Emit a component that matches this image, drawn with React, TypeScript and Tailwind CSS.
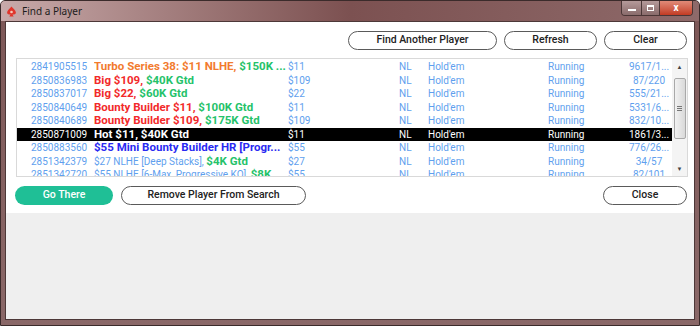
import React from 'react';

type Part = { text: string; color: string; bold?: boolean };
type Row = {
  id: string;
  name: Part[];
  buyIn: string;
  players: string;
  selected?: boolean;
};

const GREEN = 'text-[#25c26a]';

const rows: Row[] = [
  {
    id: '2841905515',
    name: [
      { text: 'Turbo Series 38: $11 NLHE, ', color: 'text-[#f27b2e]', bold: true },
      { text: '$150K ...', color: GREEN, bold: true },
    ],
    buyIn: '$11',
    players: '9617/1...',
  },
  {
    id: '2850836983',
    name: [
      { text: 'Big $109, ', color: 'text-[#f22a2a]', bold: true },
      { text: '$40K Gtd', color: GREEN, bold: true },
    ],
    buyIn: '$109',
    players: '87/220',
  },
  {
    id: '2850837017',
    name: [
      { text: 'Big $22, ', color: 'text-[#f22a2a]', bold: true },
      { text: '$60K Gtd', color: GREEN, bold: true },
    ],
    buyIn: '$22',
    players: '555/21...',
  },
  {
    id: '2850840649',
    name: [
      { text: 'Bounty Builder $11, ', color: 'text-[#f22a2a]', bold: true },
      { text: '$100K Gtd', color: GREEN, bold: true },
    ],
    buyIn: '$11',
    players: '5331/6...',
  },
  {
    id: '2850840689',
    name: [
      { text: 'Bounty Builder $109, ', color: 'text-[#f22a2a]', bold: true },
      { text: '$175K Gtd', color: GREEN, bold: true },
    ],
    buyIn: '$109',
    players: '832/10...',
  },
  {
    id: '2850871009',
    name: [{ text: 'Hot $11, $40K Gtd', color: 'text-white', bold: true }],
    buyIn: '$11',
    players: '1861/3...',
    selected: true,
  },
  {
    id: '2850883560',
    name: [{ text: '$55 Mini Bounty Builder HR [Progr...', color: 'text-[#2a2af2]', bold: true }],
    buyIn: '$55',
    players: '776/26...',
  },
  {
    id: '2851342379',
    name: [
      { text: '$27 NLHE [Deep Stacks], ', color: 'text-[#5f9fee]' },
      { text: '$4K Gtd', color: GREEN, bold: true },
    ],
    buyIn: '$27',
    players: '34/57',
  },
  {
    id: '2851342720',
    name: [
      { text: '$55 NLHE [6-Max, Progressive KO], ', color: 'text-[#5f9fee]' },
      { text: '$8K...', color: GREEN, bold: true },
    ],
    buyIn: '$55',
    players: '82/101',
  },
];

const PillButton = ({ label, className }: { label: string; className: string }) => (
  <button
    type="button"
    className={`h-[19px] rounded-full border border-[#5a5a5a] bg-white text-[10.5px] font-medium text-[#222] leading-none ${className}`}
  >
    {label}
  </button>
);

const SpadeIcon = () => (
  <svg width="11" height="11" viewBox="0 0 20 20">
    <path
      d="M10 1 C7 5 2 8 2 12 C2 15 5 16.5 8 15 C7.5 17 7 18 6 19 L14 19 C13 18 12.5 17 12 15 C15 16.5 18 15 18 12 C18 8 13 5 10 1 Z"
      fill="#e0352b"
    />
    <circle cx="10" cy="11" r="2.4" fill="#f6c9b8" />
  </svg>
);

export default function App() {
  return (
    <div className="w-[700px] h-[326px] flex flex-col bg-gradient-to-b from-[#7d5757] to-[#8a6868] border border-[#3b2b2b] rounded-t-[5px] overflow-hidden font-['Roboto',sans-serif]">
      {/* title bar */}
      <div className="h-[20px] flex items-start bg-gradient-to-r from-[#c8aaaa] via-[#7c5151] to-[#8e6a6a]">
        <div className="flex items-center h-[20px] pl-[5px] gap-[5px]">
          <SpadeIcon />
          <span className="text-[10px] text-[#1c1c1c] font-['Noto_Sans',sans-serif]">Find a Player</span>
        </div>
        <div className="ml-auto mr-[6px] flex h-[15px] border border-t-0 border-[#4a3636] rounded-b-[4px] overflow-hidden">
          <div className="w-[20px] flex items-center justify-center bg-gradient-to-b from-[#b59a9a] to-[#8a6c6c] border-r border-[#4a3636]">
            <div className="w-[8px] h-[2px] bg-white mt-[4px]" />
          </div>
          <div className="w-[18px] flex items-center justify-center bg-gradient-to-b from-[#b59a9a] to-[#8a6c6c] border-r border-[#4a3636]">
            <div className="w-[7px] h-[6px] border border-white border-t-2" />
          </div>
          <div className="w-[32px] flex items-center justify-center bg-gradient-to-b from-[#e08a78] to-[#c23a22] text-white text-[10px] font-bold leading-none">
            x
          </div>
        </div>
      </div>

      {/* client area */}
      <div className="flex-1 mx-[4px] mb-[5px] border border-[#4d3838] bg-[#efefef] flex flex-col">
        <div className="h-[191px] bg-white flex flex-col">
          <div className="mt-[9px] flex justify-end gap-[7px] pr-[7px]">
            <PillButton label="Find Another Player" className="w-[149px]" />
            <PillButton label="Refresh" className="w-[93px]" />
            <PillButton label="Clear" className="w-[83px]" />
          </div>

          {/* table */}
          <div className="mt-[8px] ml-[10px] mr-[6px] h-[119px] border border-[#d9d9d9] flex overflow-hidden">
            <div className="flex-1 overflow-hidden pt-[1px] text-[10px]">
              {rows.map((r) => {
                const c = r.selected ? 'text-white' : 'text-[#5f9fee]';
                return (
                  <div
                    key={r.id}
                    className={`h-[13.5px] leading-[13.5px] flex whitespace-nowrap ${r.selected ? 'bg-black' : ''} ${c}`}
                  >
                    <div className="w-[77px] pl-[14px] shrink-0">{r.id}</div>
                    <div className="w-[194px] shrink-0 overflow-hidden">
                      {r.name.map((p, i) => (
                        <span key={i} className={`${p.color} ${p.bold ? 'font-bold text-[11.5px]' : ''}`}>
                          {p.text}
                        </span>
                      ))}
                    </div>
                    <div className="w-[111px] shrink-0">{r.buyIn}</div>
                    <div className="w-[29px] shrink-0">NL</div>
                    <div className="w-[120px] shrink-0">Hold'em</div>
                    <div className="w-[80px] shrink-0">Running</div>
                    <div className="w-[42px] shrink-0 text-center">{r.players}</div>
                  </div>
                );
              })}
            </div>
            {/* scrollbar */}
            <div className="w-[15px] shrink-0 flex flex-col items-center bg-[#f4f4f4]">
              <div className="h-[15px] flex items-center justify-center text-[6px] text-[#444]">▲</div>
              <div className="mt-[4px] w-[12px] h-[61px] rounded-[2px] border border-[#a9a9a9] bg-gradient-to-r from-[#f2f2f2] to-[#d9d9d9] flex flex-col items-center justify-center gap-[1px]">
                <div className="w-[5px] h-px bg-[#777]" />
                <div className="w-[5px] h-px bg-[#777]" />
                <div className="w-[5px] h-px bg-[#777]" />
              </div>
              <div className="mt-auto h-[15px] flex items-center justify-center text-[6px] text-[#444]">▼</div>
            </div>
          </div>

          {/* bottom buttons */}
          <div className="mt-[9px] flex items-center pl-[9px] pr-[7px] gap-[8px]">
            <button
              type="button"
              className="h-[19px] w-[98px] rounded-full bg-[#1fbf96] text-white text-[10.5px] font-medium leading-none"
            >
              Go There
            </button>
            <PillButton label="Remove Player From Search" className="w-[185px]" />
            <div className="flex-1" />
            <PillButton label="Close" className="w-[84px]" />
          </div>
        </div>
      </div>
    </div>
  );
}
